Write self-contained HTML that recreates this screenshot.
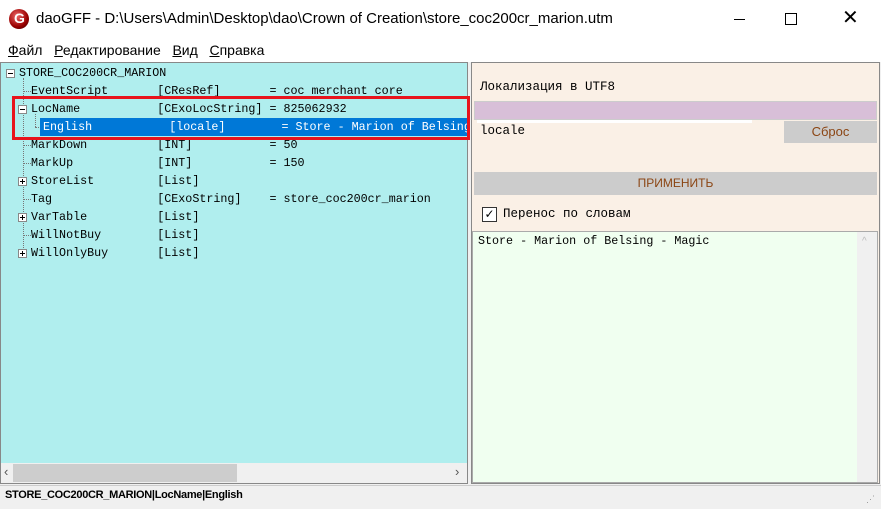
<html><head><style>
body{margin:0;width:881px;height:508px;position:relative;background:#f0f0f0;font-family:"Liberation Sans",sans-serif;overflow:hidden}
.a{position:absolute}
.m{font-family:"Liberation Mono",monospace;font-size:11.7px;white-space:pre}
.r{position:absolute;height:18px;line-height:18px}
.pm{position:absolute;width:7px;height:7px;border:1px solid #888;background:#fff;font-size:0}
.pm:after{content:"";position:absolute;left:1px;top:3px;width:5px;height:1px;background:#000}
.pl:before{content:"";position:absolute;left:3px;top:1px;width:1px;height:5px;background:#000}
.dv{position:absolute;border-left:1px dotted #777}
.dh{position:absolute;border-top:1px dotted #777;width:8px}
</style></head><body>
<div class="a" style="left:0;top:0;width:881px;height:38px;background:#fff"></div>
<div class="a" style="left:9px;top:9px;width:20px;height:20px;border-radius:50%;background:radial-gradient(circle at 40% 35%,#e66,#900 60%,#300);"></div>
<div class="a" style="left:14px;top:10px;color:#fff;font-weight:bold;font-size:14px">G</div>
<div class="a" style="left:36px;top:10px;font-size:15px;color:#000">daoGFF - D:\Users\Admin\Desktop\dao\Crown of Creation\store_coc200cr_marion.utm</div>
<div class="a" style="left:734px;top:19px;width:11px;height:1px;background:#000"></div>
<div class="a" style="left:785px;top:13px;width:10px;height:10px;border:1px solid #000"></div>
<div class="a" style="left:842px;top:8px;font-size:20px;line-height:20px">✕</div>
<div class="a" style="left:0;top:38px;width:881px;height:24px;background:#fff"></div>
<div class="a" style="left:8px;top:42px;font-size:14px"><u>Ф</u>айл&nbsp;&nbsp;&nbsp;<u>Р</u>едактирование&nbsp;&nbsp;&nbsp;<u>В</u>ид&nbsp;&nbsp;&nbsp;<u>С</u>правка</div>

<div class="a" style="left:0;top:62px;width:468px;height:422px;background:#b0eeee;border:1px solid #888;box-sizing:border-box"></div>
<div class="dv" style="left:23px;top:78px;height:180px"></div>
<div class="dv" style="left:35px;top:114px;height:13px"></div>
<div class="dh" style="left:23px;top:91px"></div><div class="dh" style="left:23px;top:145px"></div><div class="dh" style="left:23px;top:163px"></div><div class="dh" style="left:23px;top:199px"></div><div class="dh" style="left:23px;top:235px"></div><div class="dh" style="left:35px;top:127px"></div>
<div class="pm" style="left:6px;top:69px"></div>
<div class="pm" style="left:18px;top:105px"></div>
<div class="pm pl" style="left:18px;top:177px"></div>
<div class="pm pl" style="left:18px;top:213px"></div>
<div class="pm pl" style="left:18px;top:249px"></div>
<div class="a" style="left:40px;top:118px;width:428px;height:18px;background:#0078d7"></div>
<div class="m">
<div class="r" style="left:19px;top:64px">STORE_COC200CR_MARION</div>
<div class="r" style="left:31px;top:82px">EventScript       [CResRef]       = coc merchant core</div>
<div class="r" style="left:31px;top:100px">LocName           [CExoLocString] = 825062932</div>
<div class="r" style="left:43px;top:118px;color:#fff">English           [locale]        = Store - Marion of Belsing</div>
<div class="r" style="left:31px;top:136px">MarkDown          [INT]           = 50</div>
<div class="r" style="left:31px;top:154px">MarkUp            [INT]           = 150</div>
<div class="r" style="left:31px;top:172px">StoreList         [List]</div>
<div class="r" style="left:31px;top:190px">Tag               [CExoString]    = store_coc200cr_marion</div>
<div class="r" style="left:31px;top:208px">VarTable          [List]</div>
<div class="r" style="left:31px;top:226px">WillNotBuy        [List]</div>
<div class="r" style="left:31px;top:244px">WillOnlyBuy       [List]</div>
</div>
<div class="a" style="left:12px;top:96px;width:458px;height:44px;border:3px solid #e8141c;box-sizing:border-box"></div>
<div class="a" style="left:1px;top:463px;width:466px;height:20px;background:#f0f0f0"></div>
<div class="a" style="left:13px;top:464px;width:224px;height:18px;background:#cdcdcd"></div>
<div class="a" style="left:4px;top:464px;font-size:13px;color:#555">‹</div>
<div class="a" style="left:455px;top:464px;font-size:13px;color:#555">›</div>

<div class="a" style="left:471px;top:62px;width:409px;height:422px;background:#faf0e6;border:1px solid #888;box-sizing:border-box"></div>
<div class="a m" style="left:480px;top:80px;font-size:12.5px">Локализация в UTF8</div>
<div class="a" style="left:474px;top:101px;width:403px;height:19px;background:#d8bfd8;border:1px solid #ccc;box-sizing:border-box"></div>
<div class="a" style="left:477px;top:120px;width:275px;height:3px;background:#fff"></div>
<div class="a m" style="left:480px;top:124px;font-size:12.5px">locale</div>
<div class="a" style="left:784px;top:121px;width:93px;height:22px;background:#ccc;color:#8b4513;font-size:13px;text-align:center;line-height:22px">Сброс</div>
<div class="a" style="left:474px;top:172px;width:403px;height:23px;background:#ccc;color:#8b4513;font-size:12px;text-align:center;line-height:23px">ПРИМЕНИТЬ</div>
<div class="a" style="left:482px;top:207px;width:13px;height:13px;border:1px solid #333;background:#fff;font-size:12px;line-height:13px;text-align:center">✓</div>
<div class="a m" style="left:503px;top:207px;font-size:12.5px">Перенос по словам</div>
<div class="a" style="left:472px;top:231px;width:406px;height:252px;background:#f0fff0;border:1px solid #aaa;box-sizing:border-box"></div>
<div class="a m" style="left:478px;top:234px">Store - Marion of Belsing - Magic</div>
<div class="a" style="left:857px;top:232px;width:20px;height:250px;background:#f0f0f0"></div>
<div class="a" style="left:862px;top:236px;font-size:10px;color:#bbb">^</div>

<div class="a" style="left:0;top:485px;width:881px;height:23px;background:#f0f0f0;border-top:1px solid #ccc"></div>
<div class="a" style="left:5px;top:489px;font-family:'Liberation Sans Narrow','Liberation Sans',sans-serif;font-size:11px;font-weight:bold;letter-spacing:-0.3px">STORE_COC200CR_MARION|LocName|English</div>
<div class="a" style="left:866px;top:494px;font-size:9px;color:#999">⋰</div>
</body></html>
